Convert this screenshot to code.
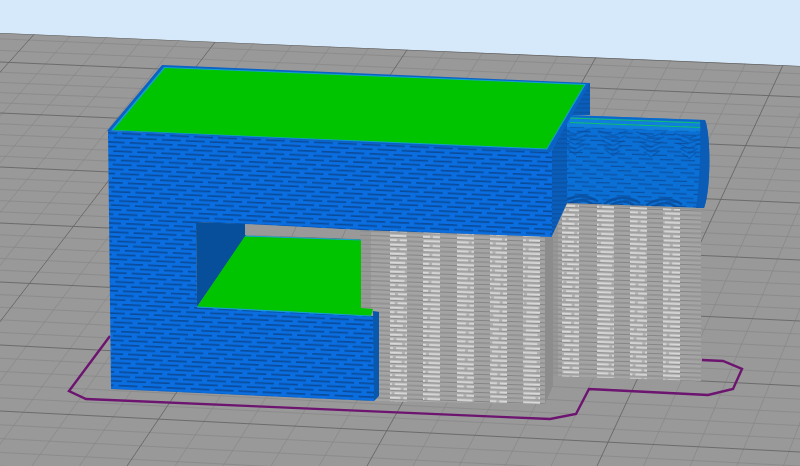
const grid = () => {
  // perspective bed grid: major lines are measured, minors are interpolated
  const rows: [number, number][] = [
    [4, 39], [62, 97], [113, 148], [167, 203], [223, 260],
    [282, 321], [345, 386], [411, 452], [480, 522],
  ];
  const cols: [number, number][] = [
    [20, -354], [209, -111], [407, 127], [600, 367], [790, 597], [980, 830],
  ];
  const line = (a: number, b: number) => {
    const top = a + ((a - b) * 25) / 416;
    return `M${top} 25L${b} 466`;
  };
  const major: string[] = [];
  const minor: string[] = [];
  rows.forEach((r, i) => {
    major.push(`M0 ${r[0]}L800 ${r[1]}`);
    const n = rows[i + 1];
    if (!n) return;
    for (let k = 1; k < 5; k++) {
      const a = r[0] + ((n[0] - r[0]) * k) / 5;
      const b = r[1] + ((n[1] - r[1]) * k) / 5;
      minor.push(`M0 ${a}L800 ${b}`);
    }
  });
  cols.forEach((c, i) => {
    major.push(line(c[0], c[1]));
    const n = cols[i + 1];
    if (!n) return;
    for (let k = 1; k < 5; k++) {
      const a = c[0] + ((n[0] - c[0]) * k) / 5;
      const b = c[1] + ((n[1] - c[1]) * k) / 5;
      minor.push(line(a, b));
    }
  });
  return { major: major.join(""), minor: minor.join("") };
};

const chevrons = () => {
  const d: string[] = [];
  for (let x = 575; x < 700; x += 38) {
    for (let row = 0; row < 5; row++) {
      const y = 134 + row * 5 + (x - 567) * 0.035;
      const w = 15 - row * 2;
      d.push(`M${x - w} ${y - 5}L${x} ${y}L${x + w} ${y - 5}`);
    }
  }
  return d.join("");
};

const waves = () => {
  const d: string[] = [];
  for (let x = 580; x < 700; x += 42) {
    const y = 200 + (x - 567) * 0.035;
    d.push(`M${x - 18} ${y + 2}Q${x} ${y - 10} ${x + 18} ${y + 1}`);
    d.push(`M${x - 12} ${y + 4}Q${x} ${y - 4} ${x + 12} ${y + 3}`);
  }
  return d.join("");
};

const PrintPreview = () => {
  const g = grid();
  const supportOne = [390, 423, 457, 490, 523];
  const supportTwo = [562, 597, 630, 663];
  return (
    <svg viewBox="0 0 800 466" className="block w-[800px] h-[466px] blur-[0.5px]">
      <defs>
        <pattern id="blueRows" width="24" height="13.5" patternUnits="userSpaceOnUse" patternTransform="rotate(2.6)">
          <rect width="24" height="13.5" fill="#0a6ee0" />
          <g fill="#0a4a98">
            <rect x="0" y="10" width="19" height="1.6" />
            <rect x="8" y="5.5" width="16" height="1.6" />
            <rect x="0" y="5.5" width="3" height="1.6" />
            <rect x="16" y="1" width="8" height="1.6" />
            <rect x="0" y="1" width="11" height="1.6" />
          </g>
        </pattern>
        <pattern id="sideRows" width="20" height="4.4" patternUnits="userSpaceOnUse">
          <rect width="20" height="4.4" fill="#0a5db8" />
          <rect y="2" width="20" height="1" fill="#0a4f9f" />
        </pattern>
        <pattern id="cylRows" width="21" height="12.6" patternUnits="userSpaceOnUse" patternTransform="rotate(2)">
          <rect width="21" height="12.6" fill="#0b70d6" />
          <g fill="#0a4f9f">
            <rect x="0" y="1.4" width="14" height="1.2" />
            <rect x="7" y="5.6" width="14" height="1.2" />
            <rect x="14" y="9.8" width="7" height="1.2" />
            <rect x="0" y="9.8" width="7" height="1.2" />
          </g>
        </pattern>
        <pattern id="supportDark" width="24" height="9" patternUnits="userSpaceOnUse" patternTransform="rotate(2)">
          <rect width="24" height="9" fill="#a4a4a4" />
          <rect y="1.5" width="24" height="1" fill="#858585" />
          <rect y="6" width="24" height="1" fill="#858585" />
        </pattern>
        <pattern id="supportLight" width="24" height="9" patternUnits="userSpaceOnUse" patternTransform="rotate(2)">
          <rect width="24" height="9" fill="#b0b0b0" />
          <g fill="#dadada">
            <rect x="0" y="0.3" width="21" height="1.9" />
            <rect x="9" y="4.8" width="15" height="1.9" />
            <rect x="0" y="4.8" width="6" height="1.9" />
          </g>
          <rect y="2.6" width="24" height="0.8" fill="#858585" />
          <rect y="7.1" width="24" height="0.8" fill="#858585" />
        </pattern>
        <clipPath id="bed">
          <path d="M0 33L800 66V466H0Z" />
        </clipPath>
        <clipPath id="supOne">
          <path d="M360 230L553 237V386L545 404L379 401L360 401Z" />
        </clipPath>
        <clipPath id="supTwo">
          <path d="M567 204L701 210V381L553 376V236Z" />
        </clipPath>
        <clipPath id="cyl">
          <path d="M567 115L705 120C711 135 711 190 704 208L567 203Z" />
        </clipPath>
      </defs>

      <rect width="800" height="466" fill="#d5e9fb" />
      <path d="M0 33L800 66V466H0Z" fill="#999999" />
      <g clipPath="url(#bed)" fill="none">
        <path d={g.minor} stroke="#868686" strokeWidth="0.7" />
        <path d={g.major} stroke="#666666" strokeWidth="0.9" />
        <path d="M0 33L800 66" stroke="#666666" strokeWidth="1.2" />
      </g>

      {/* skirt */}
      <path
        d="M110 336L69 391L86 399L550 419L576 414L589 389L708 395L733 389L742 369L723 361L702 360"
        fill="none"
        stroke="#6c1470"
        strokeWidth="2.4"
      />

      {/* supports */}
      <g clipPath="url(#supTwo)">
        <rect x="552" y="200" width="150" height="190" fill="url(#supportDark)" />
        {supportTwo.map((x) => (
          <rect key={x} x={x} y="200" width="17" height="190" fill="url(#supportLight)" />
        ))}
        <rect x="552" y="200" width="6" height="190" fill="#8f8f8f" opacity="0.6" />
      </g>
      <g clipPath="url(#supOne)">
        <rect x="358" y="225" width="196" height="185" fill="url(#supportDark)" />
        {supportOne.map((x) => (
          <rect key={x} x={x} y="225" width="17" height="185" fill="url(#supportLight)" />
        ))}
        <rect x="545" y="225" width="9" height="185" fill="#8c8c8c" />
        <rect x="360" y="225" width="11" height="185" fill="#8e8e8e" opacity="0.55" />
      </g>

      {/* cylinder */}
      <path d="M567 115L705 120C711 135 711 190 704 208L567 203Z" fill="url(#cylRows)" />
      <g clipPath="url(#cyl)" fill="none">
        <path d="M567 115L705 120L704 132L567 127Z" fill="#1288e0" stroke="none" opacity="0.7" />
        <path d="M567 115L705 120L704 122L567 117Z" fill="#0b68c8" stroke="none" />
        <path d="M570 118L702 123M570 122.5L702 127.5" stroke="#10c070" strokeWidth="1" />
        <path d={chevrons()} stroke="#0a4f9f" strokeWidth="1.4" opacity="0.55" />
        <path d={waves()} stroke="#0a4a96" strokeWidth="2.4" opacity="0.75" />
      </g>
      <path d="M700 120L705 120C711 135 711 190 704 208L696 208C700 185 701 140 700 120Z" fill="#0a5cb6" />

      {/* upper block side */}
      <path d="M585 83L590 83L590 115L567 115L567 203L552 236L552 150Z" fill="url(#sideRows)" />

      {/* main body front */}
      <path
        d="M108 131L552 151V237L360 230L196 222L197 307L374 316V401L111 389Z"
        fill="url(#blueRows)"
      />

      {/* notch */}
      <path d="M196 222L246 224L246 236L197 307Z" fill="#074f9a" />
      <path d="M245 224L360 230V239L245 235Z" fill="#999999" />
      <path d="M296 227L292 236M346 229L342 238" stroke="#808080" strokeWidth="0.8" fill="none" />
      <path d="M245 236L361 240V308L373 309L371 316L197 307Z" fill="#00c400" />
      <path d="M245 236L361 240M197 307L371 316" stroke="#14a0d0" strokeWidth="1.2" fill="none" />

      {/* lower block side */}
      <path d="M373 311L379 312V396L374 401Z" fill="#0a58ac" />

      {/* top face */}
      <path d="M162 65L107 131L551 152L590 83Z" fill="#0a62c4" />
      <path d="M164 67L111 130.5L547 149.5L586 84Z" fill="#14a0d0" />
      <path d="M165 68L113.5 130L546.5 148.5L584 85Z" fill="#00c400" />
    </svg>
  );
};

export default function App() {
  return (
    <div className="w-[800px] h-[466px] overflow-hidden bg-[#d5e9fb]">
      <PrintPreview />
    </div>
  );
}
